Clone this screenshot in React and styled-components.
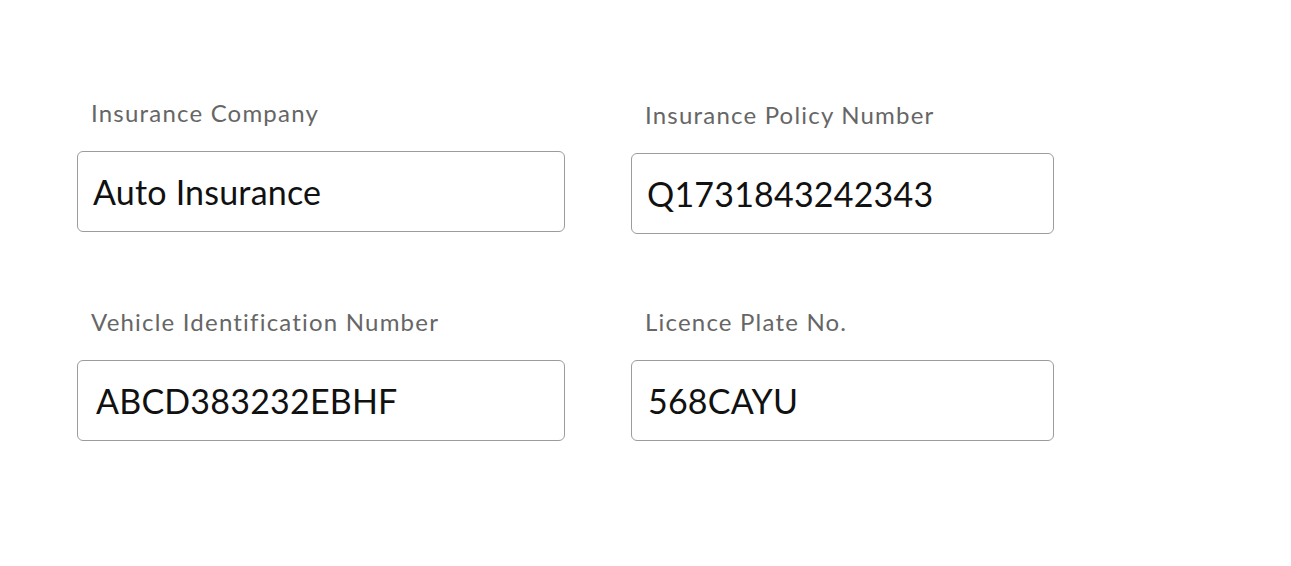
import React from "react";
import styled, { createGlobalStyle } from "styled-components";

const Global = createGlobalStyle`
  html, body { margin: 0; padding: 0; background: #ffffff; }
  body { font-family: "Lato", "Noto Sans", sans-serif; }
`;

const Page = styled.div`
  width: 1291px;
  height: 566px;
  box-sizing: border-box;
  padding: 97px 0 0 77px;
`;

const Grid = styled.div`
  display: grid;
  grid-template-columns: 488px 423px;
  column-gap: 66px;
  row-gap: 72px;
`;

const Field = styled.div`
  display: flex;
  flex-direction: column;
  gap: 22px;
  margin-top: ${(p) => p.$shift || 0}px;
`;

const Label = styled.label`
  font-size: 24px;
  line-height: 32px;
  letter-spacing: 1.2px;
  color: #666666;
  padding-left: ${(p) => p.$indent}px;
`;

const Box = styled.div`
  box-sizing: border-box;
  height: 81px;
  border: 1px solid #9c9c9c;
  border-radius: 6px;
  display: flex;
  align-items: center;
  padding-left: ${(p) => p.$indent}px;
  font-size: 34px;
  letter-spacing: 0.2px;
  color: #111111;
`;

const fields = [
  { label: "Insurance Company", value: "Auto Insurance", li: 14, vi: 15, shift: 0 },
  { label: "Insurance Policy Number", value: "Q1731843242343", li: 14, vi: 15, shift: 2 },
  { label: "Vehicle Identification Number", value: "ABCD383232EBHF", li: 14, vi: 18, shift: 0 },
  { label: "Licence Plate No.", value: "568CAYU", li: 14, vi: 16, shift: 0 },
];

export default function App() {
  return (
    <>
      <Global />
      <Page>
        <Grid>
          {fields.map((f) => (
            <Field key={f.label} $shift={f.shift}>
              <Label $indent={f.li}>{f.label}</Label>
              <Box $indent={f.vi}>{f.value}</Box>
            </Field>
          ))}
        </Grid>
      </Page>
    </>
  );
}
